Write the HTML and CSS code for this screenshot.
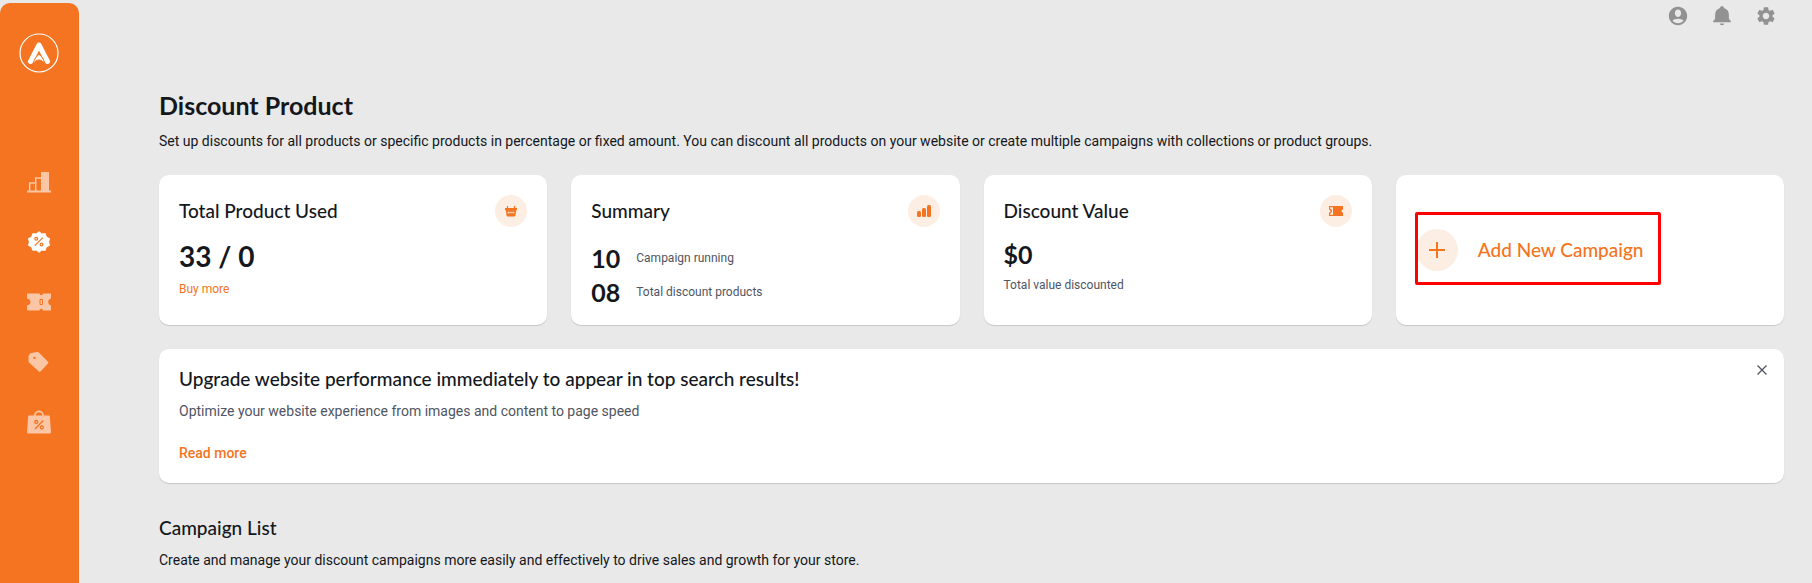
FILE: index.html
```html
<!DOCTYPE html>
<html lang="en">
<head>
<meta charset="utf-8">
<meta name="viewport" content="width=device-width, initial-scale=1">
<title>Discount Product</title>
<link rel="stylesheet" href="styles.css">
</head>
<body>
<div class="app">
  <nav class="sidebar" aria-label="Main">
    <a class="brand" href="#" aria-label="Home">
      <svg width="40" height="40" viewBox="0 0 40 40" fill="none">
        <circle cx="20" cy="20" r="19" stroke="#fff" stroke-width="1.2"/>
        <path d="M11.500 28.500 20 12l8.500 16.500" stroke="#fff" stroke-width="5" stroke-linecap="round" stroke-linejoin="round"/>
        <path d="M14.500 31C15 26 18 22.500 20 21.500c2 1 5 4.500 5.500 9.500-1.500-2.500-3-4-5.500-4s-4 1.500-5.500 4z" fill="#fff" stroke="#f57421" stroke-width="1"/>
      </svg>
    </a>
    <ul class="menu">
      <li><a class="menu-link" href="#" aria-label="Analytics">
        <svg width="24" height="24" viewBox="0 0 24 24"><path d="M0 20.500h24v2H0z" fill="#fac6a5"/><path d="M14 2h8v19h-8z" fill="#fac6a5"/><path d="M2.700 21v-8h5.300M8.700 21V8H14" fill="none" stroke="#fac6a5" stroke-width="1.500"/></svg>
      </a></li>
      <li><a class="menu-link" href="#" aria-label="Discounts" aria-current="page">
        <svg width="24" height="24" viewBox="0 0 24 24"><path d="m12 1.700 2.800 2.200 3.500-.2 1 3.400 3.200 1.500-.900 3.400.900 3.400-3.200 1.500-1 3.400-3.500-.2-2.800 2.200-2.800-2.200-3.500.2-1-3.400-3.200-1.500.900-3.400-.900-3.400 3.200-1.500 1-3.400 3.500.2z" fill="#fff" stroke="#fff" stroke-linejoin="round"/><g fill="none" stroke="#f57421" stroke-width="1.200"><circle cx="9.200" cy="8.800" r="1.400"/><circle cx="14.500" cy="14.500" r="1.400"/><path d="m15.800 7.700-8 8"/></g></svg>
      </a></li>
      <li><a class="menu-link" href="#" aria-label="Coupons">
        <svg width="24" height="24" viewBox="0 0 24 24"><path d="M0 3.500h12.500a1.700 1.700 0 0 0 3.400 0H24v5a3.600 3.600 0 0 0 0 7v5h-8.100a1.700 1.700 0 0 0-3.400 0H0v-5.200c4.800-.300 4.800-6.300 0-6.600z" fill="#fac6a5"/><path d="M13 9.500h2.500v5H13z" fill="#fac6a5" stroke="#f57421" stroke-width="1"/></svg>
      </a></li>
      <li><a class="menu-link" href="#" aria-label="Price tags">
        <svg width="24" height="24" viewBox="0 0 24 24"><path fill-rule="evenodd" d="M1.500 6 3.200 3.200 10 2q1-.2 1.800.500l9.200 9.300q.800.800 0 1.600L13.500 21.600q-.8.700-1.600 0L2 12.500q-.500-.500-.500-1.200zM7.500 6.700a1.200 1.200 0 1 0 0 2.400 1.200 1.200 0 0 0 0-2.400z" fill="#fac6a5"/></svg>
      </a></li>
      <li><a class="menu-link" href="#" aria-label="Sales">
        <svg width="24" height="24" viewBox="0 0 24 24"><path d="M2 5.500h20q.700 0 .800.800L24 22q0 1.500-1.500 1.500h-21Q0 23.500 0 22L1.200 6.300q.1-.8.800-.8z" fill="#fac6a5"/><path d="M7.800 6c0-6.200 8.400-6.200 8.400 0" fill="none" stroke="#fac6a5" stroke-width="1.700"/><g fill="none" stroke="#f57421" stroke-width="1.300"><circle cx="9.300" cy="12" r="1.500"/><circle cx="14.800" cy="17.500" r="1.500"/><path d="m16.300 10.500-8.300 8.500"/></g></svg>
      </a></li>
    </ul>
  </nav>

  <div class="page">
    <header class="topbar">
      <button class="icon-button" type="button" aria-label="Account"><svg width="22" height="22" viewBox="0 0 24 24" fill="#929292"><path d="M12 2C6.480 2 2 6.480 2 12s4.480 10 10 10 10-4.480 10-10S17.520 2 12 2zm0 3c1.900 0 3.400 1.700 3.400 4s-1.500 4-3.400 4-3.400-1.700-3.400-4S10.100 5 12 5zm0 15c-2.500 0-4.700-1-6-2.700C6.500 15.800 10 15 12 15s5.500.800 6 2.300C16.700 19 14.500 20 12 20z"/></svg></button>
      <button class="icon-button" type="button" aria-label="Notifications"><svg width="22" height="22" viewBox="0 0 24 24" fill="#929292"><path d="M12 22.200c1.300 0 2.400-.700 2.400-1.900H9.600c0 1.200 1.100 1.900 2.400 1.900zM19.500 15v-4.500c0-3.500-2.200-6.200-5.400-7.100V3c0-1-.9-1.700-2.100-1.700S9.900 2 9.900 3v.4c-3.200.9-5.400 3.600-5.400 7.100V15l-2.200 2.800v1h19.400v-1z"/></svg></button>
      <button class="icon-button" type="button" aria-label="Settings"><svg width="22" height="22" viewBox="0 0 24 24" fill="#929292"><path d="M19.140 12.940c.04-.3.060-.610.060-.940 0-.320-.020-.640-.070-.940l2.030-1.580c.180-.140.230-.410.120-.610l-1.920-3.320c-.120-.220-.370-.290-.590-.220l-2.390.960c-.5-.380-1.030-.7-1.620-.940l-.360-2.540c-.040-.240-.240-.410-.480-.410h-3.840c-.240 0-.430.170-.470.410l-.36 2.540c-.59.240-1.130.570-1.620.940l-2.390-.960c-.220-.080-.470 0-.590.220L2.740 8.870c-.120.210-.080.470.120.610l2.030 1.580c-.05.3-.09.630-.09.940s.020.640.070.940l-2.030 1.580c-.180.140-.230.410-.120.610l1.920 3.320c.120.220.370.290.590.220l2.390-.960c.5.380 1.030.7 1.620.940l.36 2.540c.05.240.240.410.480.410h3.840c.240 0 .440-.170.470-.410l.36-2.540c.590-.240 1.130-.560 1.620-.940l2.390.960c.220.080.470 0 .590-.220l1.920-3.320c.120-.220.070-.470-.120-.610l-2.010-1.580zM12 15.600c-1.980 0-3.600-1.620-3.600-3.600s1.620-3.600 3.600-3.600 3.600 1.620 3.600 3.600-1.620 3.600-3.600 3.600z"/></svg></button>
    </header>

    <main class="content">
      <h1 class="title">Discount Product</h1>
      <p class="intro">Set up discounts for all products or specific products in percentage or fixed amount. You can discount all products on your website or create multiple campaigns with collections or product groups.</p>

      <section class="cards">
        <article class="card">
          <div class="card-head">
            <h2 class="heading">Total Product Used</h2>
            <span class="badge"><svg width="14" height="14" viewBox="0 0 14 14"><path d="M1 4h12v2h-.700l-.9 5.500q-.2 1-1 1H3.600q-.8 0-1-1L1.700 6H1z" fill="#f57421"/><path d="M3.500 2v3M10.500 2v3" stroke="#f57421" stroke-width="1.200"/><path d="M3.700 8.500h6.600" stroke="#fdeee4" stroke-width="1.300" stroke-dasharray="1.300 .5"/></svg></span>
          </div>
          <p class="figure figure-large">33 / 0</p>
          <a class="small-link" href="#">Buy more</a>
        </article>

        <article class="card">
          <div class="card-head">
            <h2 class="heading">Summary</h2>
            <span class="badge"><svg width="14" height="14" viewBox="0 0 14 14" fill="#f57421"><rect x="0" y="7" width="4" height="6" rx="1.500"/><rect x="5" y="4" width="4" height="9" rx="1.500"/><rect x="10" y="1" width="4" height="12" rx="1.500"/></svg></span>
          </div>
          <dl class="stats">
            <div class="stat"><dd class="figure">10</dd><dt class="caption">Campaign running</dt></div>
            <div class="stat"><dd class="figure">08</dd><dt class="caption">Total discount products</dt></div>
          </dl>
        </article>

        <article class="card">
          <div class="card-head">
            <h2 class="heading">Discount Value</h2>
            <span class="badge"><svg width="14" height="14" viewBox="0 0 14 14"><path d="M0 2h14v3.500a1.500 1.500 0 0 0 0 3V12H0V8.500a1.500 1.500 0 0 0 0-3z" fill="#f57421"/><path d="M1.200 3.200H4v7.600H1.200V9.500a2.600 2.600 0 0 0 0-5z" fill="#fdeee4"/></svg></span>
          </div>
          <p class="figure">$0</p>
          <p class="caption">Total value discounted</p>
        </article>

        <article class="card card-add">
          <button class="add" type="button">
            <span class="add-icon"><svg width="16" height="16" viewBox="0 0 16 16"><path d="M8 0v16M0 8h16" stroke="#f57421" stroke-width="2"/></svg></span>
            <span class="heading">Add New Campaign</span>
          </button>
        </article>
      </section>

      <section class="banner">
        <div class="banner-body">
          <h2 class="heading">Upgrade website performance immediately to appear in top search results!</h2>
          <p class="banner-text">Optimize your website experience from images and content to page speed</p>
          <a class="read-more" href="#">Read more</a>
        </div>
        <button class="close" type="button" aria-label="Close"><svg width="10" height="10" viewBox="0 0 10 10"><path d="m.5.5 9 9m0-9-9 9" stroke="#4a4f5c" stroke-width="1.200"/></svg></button>
      </section>

      <section class="list">
        <h2 class="heading">Campaign List</h2>
        <p class="list-text">Create and manage your discount campaigns more easily and effectively to drive sales and growth for your store.</p>
      </section>
    </main>
  </div>
</div>
</body>
</html>
```
FILE: styles.css
```css
* {
  box-sizing: border-box;
}

body, h1, h2, p, ul, dl, dd {
  margin: 0;
}

body {
  background: #e9e9e9;
  color: #14171c;
  font-family: Roboto, "Open Sans", sans-serif;
  font-size: 14px;
  line-height: 20px;
}

button {
  padding: 0;
  border: 0;
  background: none;
  font: inherit;
  color: inherit;
  cursor: pointer;
}

a {
  color: #f57421;
  text-decoration: none;
}

svg {
  display: block;
}

.app {
  display: flex;
  min-height: 100vh;
}

.sidebar {
  display: flex;
  flex: none;
  flex-direction: column;
  align-items: center;
  width: 79px;
  margin-top: 3px;
  padding: 30px 2px 0 0;
  border-radius: 10px 10px 0 0;
  background: #f57421;
}

.menu {
  display: grid;
  gap: 36px;
  margin-top: 97px;
  padding: 0;
  list-style: none;
}

.page {
  flex: 1;
  min-width: 0;
  padding: 5px 28px 0 80px;
}

.topbar {
  display: flex;
  justify-content: flex-end;
  gap: 22px;
  padding-right: 7px;
}

.content {
  padding-top: 63px;
}

.title,
.heading,
.figure {
  font-family: Lato, "Open Sans", sans-serif;
}

.title {
  font-size: 25px;
  font-weight: 700;
  line-height: 30px;
}

.intro {
  margin-top: 11px;
}

.cards {
  display: grid;
  grid-template-columns: repeat(4, minmax(0, 1fr));
  gap: 24px;
  margin-top: 24px;
}

.card,
.banner {
  border-radius: 10px;
  background: #fff;
  box-shadow: 0 1px 1px rgba(0, 0, 0, 0.15);
}

.card {
  min-height: 150px;
  padding: 20px 20px 16px;
}

.card-head {
  display: flex;
  align-items: center;
  justify-content: space-between;
}

.heading {
  font-size: 19px;
  font-weight: 500;
  line-height: 24px;
}

.badge,
.add-icon {
  display: grid;
  place-items: center;
  width: 32px;
  height: 32px;
  border-radius: 50%;
  background: #fdeee4;
}

.figure {
  margin-top: 12px;
  font-size: 25px;
  font-weight: 700;
  line-height: 30px;
}

.figure-large {
  font-size: 28px;
  line-height: 34px;
}

.caption,
.small-link {
  font-size: 12px;
  line-height: 16px;
}

.small-link {
  display: inline-block;
  margin-top: 8px;
}

.caption {
  margin-top: 8px;
  color: #4f5562;
}

.stats {
  display: grid;
  gap: 4px;
  margin-top: 16px;
}

.stat {
  display: flex;
  align-items: center;
  gap: 16px;
}

.stat .figure,
.stat .caption {
  margin-top: 0;
}

.card-add {
  display: flex;
  align-items: center;
  padding-top: 16px;
}

.add {
  position: relative;
  display: flex;
  align-items: center;
  gap: 20px;
  color: #f57421;
}

.add::after {
  position: absolute;
  inset: -17px -18px -14px -1px;
  border: 3px solid #f00;
  border-radius: 2px;
  content: "";
}

.add-icon {
  width: 42px;
  height: 42px;
}

.banner {
  display: flex;
  align-items: flex-start;
  justify-content: space-between;
  margin-top: 24px;
  padding: 16px 17px 20px 20px;
}

.banner-body {
  padding-top: 2px;
}

.banner-text {
  margin-top: 10px;
  color: #4f5562;
}

.read-more {
  display: inline-block;
  margin-top: 22px;
  font-weight: 500;
}

.list {
  margin-top: 33px;
}

.list-text {
  margin-top: 10px;
}
```
